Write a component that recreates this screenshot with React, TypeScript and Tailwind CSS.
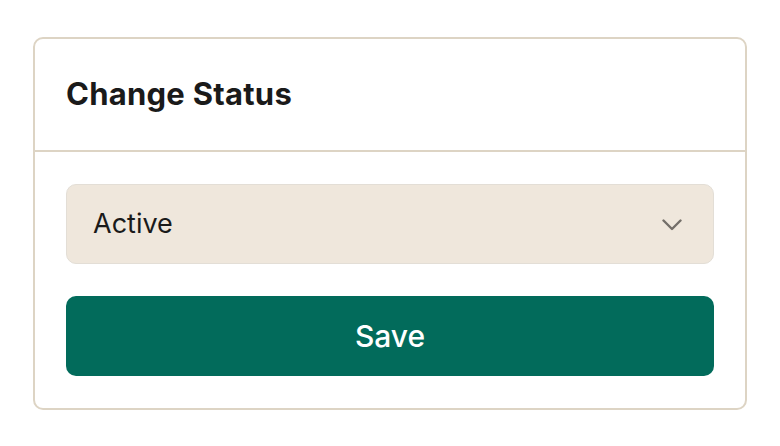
export default function App() {
  return (
    <div className="min-h-screen bg-white px-[33px] pt-[37px] font-['Inter',sans-serif]">
      <div className="w-[714px] rounded-[10px] border-2 border-[#ddd4c4] bg-white">
        {/* Header */}
        <div className="border-b-2 border-[#ddd4c4] px-[31px] pt-[31px] pb-[32px]">
          <h2 className="text-[31px] font-bold leading-[48px] tracking-[0.25px] text-[#1a1a1a]">Change Status</h2>
        </div>

        {/* Body */}
        <div className="flex flex-col gap-8 px-[31px] pt-8 pb-8">
          <div className="flex h-20 items-center justify-between rounded-[10px] border-[1.5px] border-[#e3ded6] bg-[#efe7dc] pl-[26px] pr-[31px]">
            <span className="text-[27px] text-[#1a1a1a]">Active</span>
            <svg width="20" height="12" viewBox="0 0 20 12" fill="none" className="mt-[1px]">
              <path d="M1.5 1.5 L10 10 L18.5 1.5" stroke="#746f69" strokeWidth="2.4" strokeLinecap="round" strokeLinejoin="round" />
            </svg>
          </div>
          <button className="h-20 w-full rounded-[10px] bg-[#026b5b] text-[30px] font-medium text-white">
            Save
          </button>
        </div>
      </div>
    </div>
  );
}
